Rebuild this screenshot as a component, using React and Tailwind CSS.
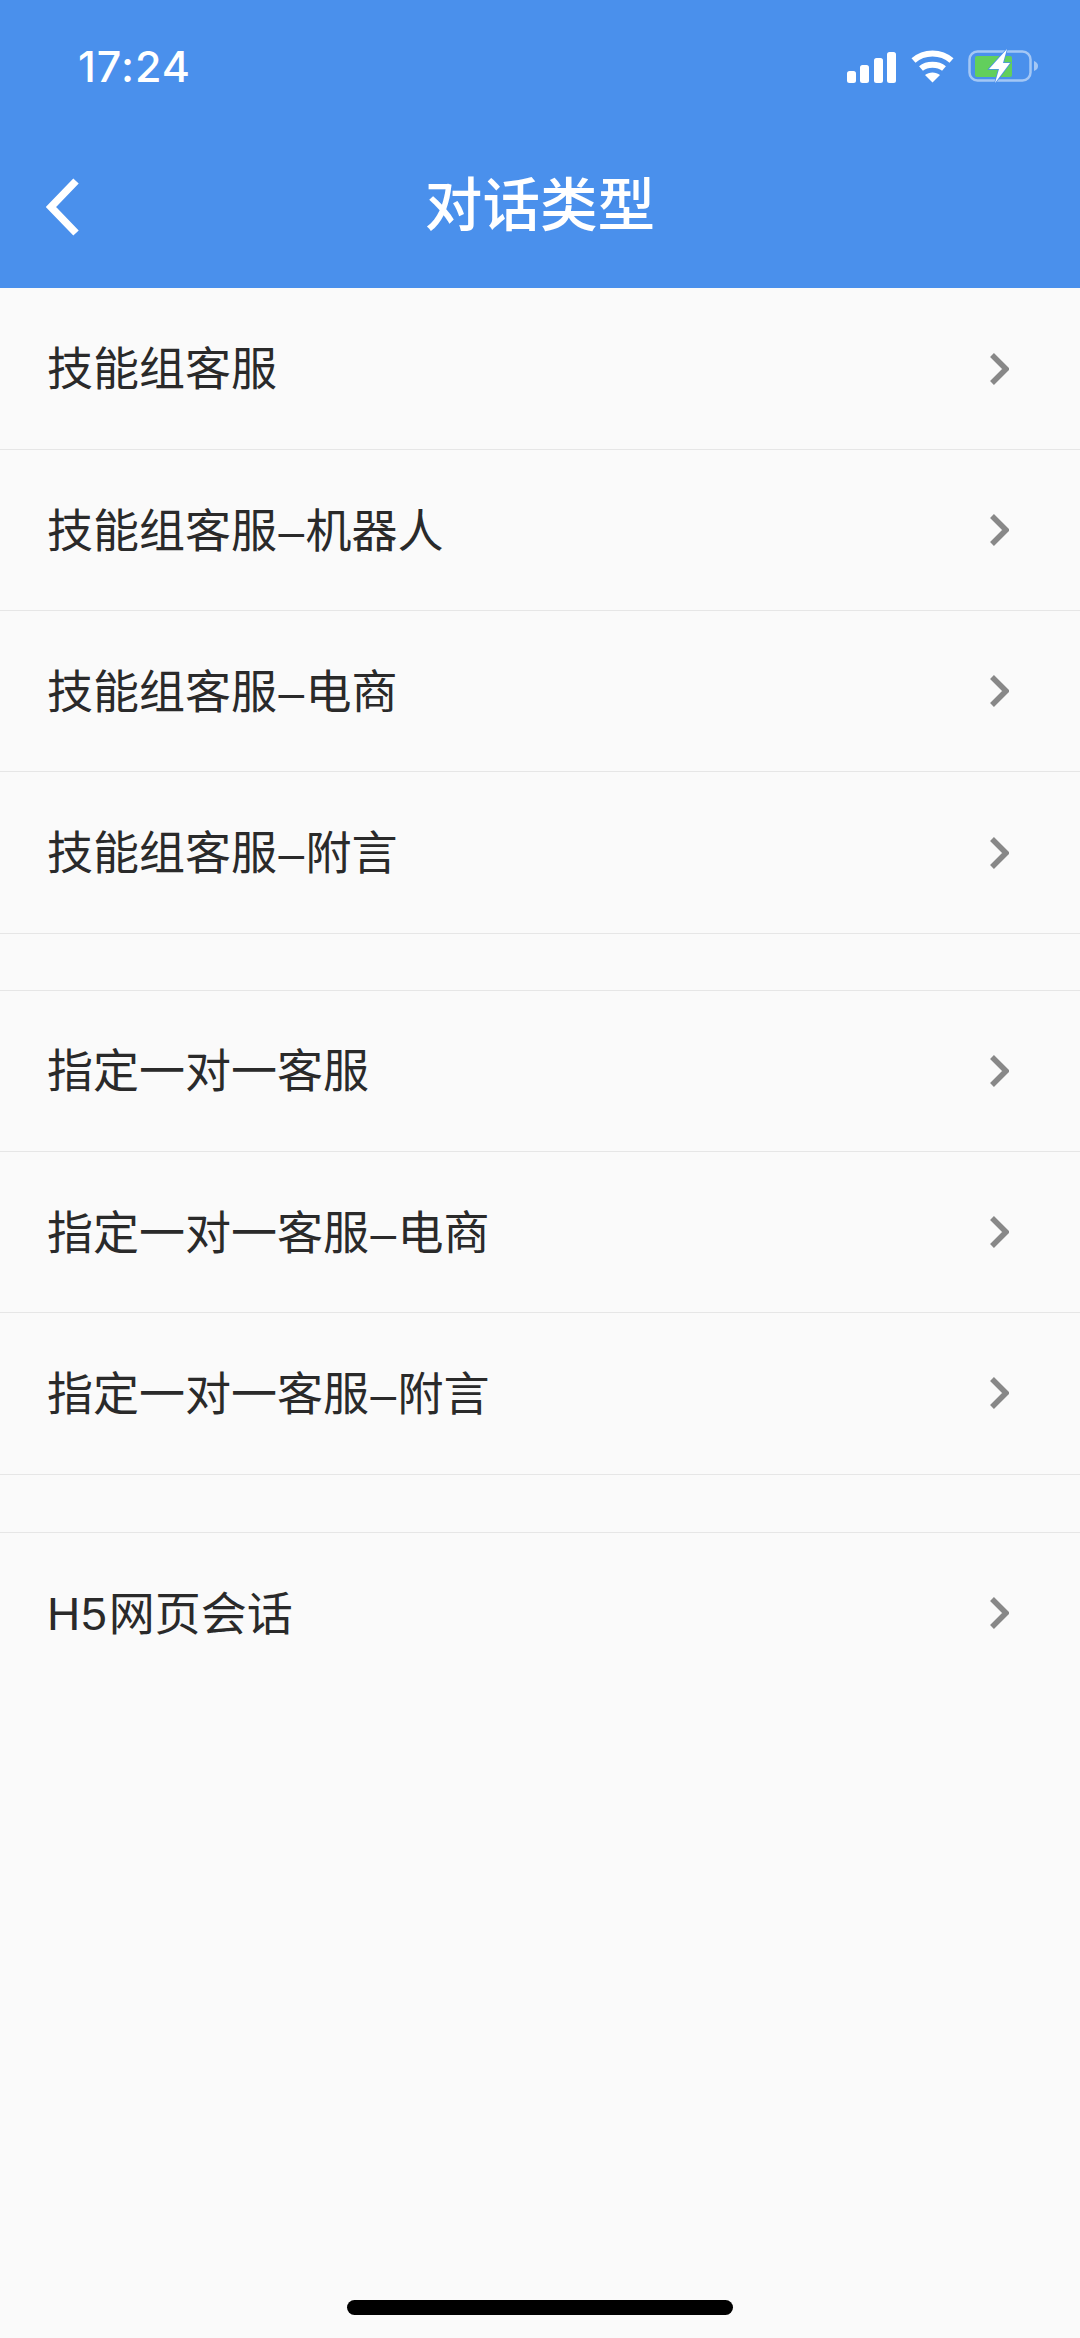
const groups = [
  {
    box: 'pt-[0.7px]',
    rows: ['技能组客服', '技能组客服–机器人', '技能组客服–电商', '技能组客服–附言'],
  },
  {
    box: 'mt-[56px] border-t border-[#e6e6e6]',
    rows: ['指定一对一客服', '指定一对一客服–电商', '指定一对一客服–附言'],
  },
  {
    box: 'mt-[57px] border-t border-[#e6e6e6]',
    rows: ['H5网页会话'],
    noLine: true,
  },
];

function StatusIcons() {
  return (
    <div className="flex items-center gap-[14px]">
      {/* 信号 */}
      <svg width="49" height="33" viewBox="0 0 49 33" className="mt-[2px] -translate-x-[1px]">
        <rect x="0" y="20" width="9" height="12" rx="2.5" fill="#fff" />
        <rect x="13" y="14" width="9" height="18" rx="2.5" fill="#fff" />
        <rect x="27" y="7" width="9" height="25" rx="2.5" fill="#fff" />
        <rect x="40" y="1" width="9" height="31" rx="2.5" fill="#fff" />
      </svg>
      {/* wifi */}
      <svg width="43" height="34" viewBox="0 0 43 34">
        <path d="M2.5 11.5 C13 2 30 2 40.5 11.5" fill="none" stroke="#fff" strokeWidth="6" />
        <path d="M10 19.5 C16 14.5 27 14.5 33 19.5" fill="none" stroke="#fff" strokeWidth="6" />
        <path d="M14 26 C18 22.5 25 22.5 29 26 L21.5 33.5 Z" fill="#fff" />
      </svg>
      {/* 电池 */}
      <svg width="71" height="36" viewBox="0 0 71 36" className="overflow-visible">
        <rect x="1.5" y="3.5" width="61" height="29" rx="8" fill="none" stroke="#a4c7f5" strokeWidth="2.5" />
        <path d="M66 13 C69 14 70 16 70 18 C70 20 69 22 66 23 Z" fill="#a4c7f5" />
        <rect x="7" y="8" width="37" height="21" rx="2" fill="#62cf5c" />
        <path d="M39 1 L21 21 L31 21 L27 35 L42 15 L35 15 Z" fill="#fff" stroke="#4a90ec" strokeWidth="1.5" paintOrder="stroke" />
      </svg>
    </div>
  );
}

function Row({ label, noLine }) {
  const [head, tail] = label.split('–');
  return (
    <div className={`flex h-[161.28px] items-center justify-between pl-[47px] pr-[71px] ${noLine ? '' : 'border-b border-[#e6e6e6]'}`}>
      <span className="pt-[1px] text-[46px] leading-none text-[#2a2a2a]">
        {head === 'H5网页会话' ? (
          <>
            <span className="mr-[1px] tracking-[1px]">H5</span>网页会话
          </>
        ) : (
          head
        )}
        {tail && (
          <>
            <span className="mx-[1.5px]">–</span>
            {tail}
          </>
        )}
      </span>
      <svg width="20" height="34" viewBox="0 0 20 34">
        <path d="M3 3 L17 17 L3 31" fill="none" stroke="#888888" strokeWidth="5.5" />
      </svg>
    </div>
  );
}

export default function App() {
  return (
    <main className="flex h-[2338px] flex-col bg-[#fafafa] font-['Liberation_Sans','Noto_Sans_CJK_SC',sans-serif]">
      <header className="h-[288px] bg-[#4a90ec] text-white">
        <div className="flex h-[132px] items-center justify-between pl-[78px] pr-[41px]">
          <span className="font-['Inter',sans-serif] text-[43px] font-medium leading-none tracking-[1px]">17:24</span>
          <StatusIcons />
        </div>
        <div className="relative flex h-[150px] items-center justify-center">
          {/* 返回 */}
          <svg width="36" height="58" viewBox="0 0 36 58" className="absolute left-[46px] top-[46px]">
            <path d="M30 3 L5 29 L30 55" fill="none" stroke="#fff" strokeWidth="7.5" />
          </svg>
          <h1 className="text-[57.6px] font-medium leading-none">对话类型</h1>
        </div>
      </header>

      {groups.map((group) => (
        <section key={group.rows[0]} className={group.box}>
          {group.rows.map((label) => (
            <Row key={label} label={label} noLine={group.noLine} />
          ))}
        </section>
      ))}

      <div className="mt-auto flex justify-center pb-[23px]">
        <div className="h-[15px] w-[386px] rounded-full bg-black" />
      </div>
    </main>
  );
}
